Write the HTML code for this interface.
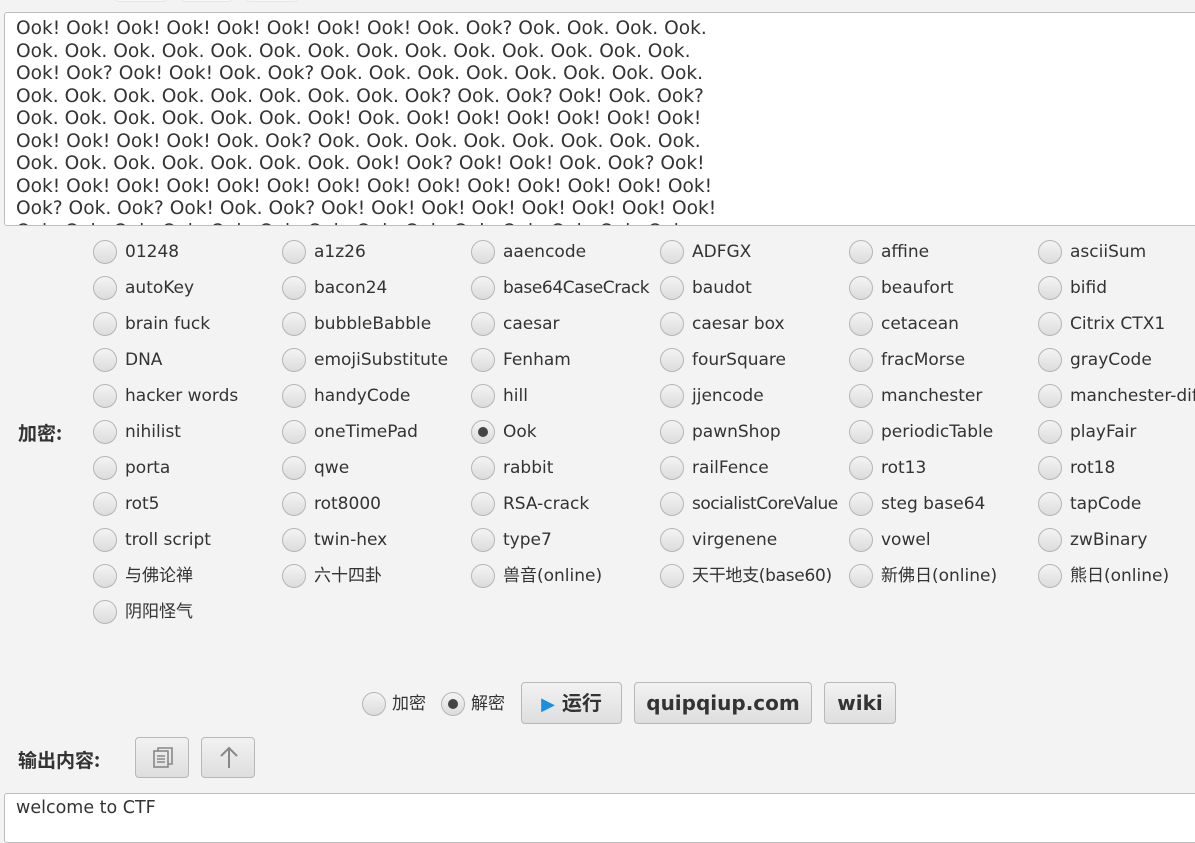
<!DOCTYPE html>
<html><head><meta charset="utf-8"><style>
*{margin:0;padding:0;box-sizing:border-box}
body{width:1195px;height:832px;background:#f3f3f3;position:relative;overflow:hidden;font-family:"DejaVu Sans","Noto Sans CJK SC",sans-serif;color:#333}
.tab{position:absolute;top:-6px;height:8px;width:52px;background:#f8f8f8;border-radius:4px;border:1px solid #e6e6e6}
.ta{position:absolute;left:4px;top:12px;width:1200px;height:214px;background:#fff;border:1px solid #bdbdbd;border-radius:3px;overflow:hidden;padding:5px 0 0 11px;font-size:18.6px;line-height:22.5px;white-space:pre;color:#333}
.r{position:absolute;height:24px;font-size:17px;line-height:24px;white-space:nowrap;padding-left:32px}
.r::before{content:"";position:absolute;left:0;top:0;width:22px;height:22px;border-radius:50%;border:1px solid #b5b5b5;background:linear-gradient(#f4f4f4,#dcdcdc)}
.r.on::after{content:"";position:absolute;left:7px;top:7px;width:10px;height:10px;border-radius:50%;background:#444}
.lbl{position:absolute;font-weight:bold;font-size:19px;font-family:"Noto Sans CJK SC",sans-serif;color:#333}
.btn{position:absolute;border:1px solid #b8b8b8;border-radius:4px;background:linear-gradient(#f2f2f2,#dedede);font-weight:bold;font-size:20px;text-align:center;color:#333;font-family:"DejaVu Sans","Noto Sans CJK SC",sans-serif}
.out{position:absolute;left:4px;top:793px;width:1200px;height:50px;background:#fff;border:1px solid #bdbdbd;border-radius:3px;padding:4px 0 0 11px;font-size:17.5px}
</style></head><body>
<div class="tab" style="left:115px"></div><div class="tab" style="left:181px"></div><div class="tab" style="left:246px"></div>
<div class="ta">Ook! Ook! Ook! Ook! Ook! Ook! Ook! Ook! Ook. Ook? Ook. Ook. Ook. Ook.
Ook. Ook. Ook. Ook. Ook. Ook. Ook. Ook. Ook. Ook. Ook. Ook. Ook. Ook.
Ook! Ook? Ook! Ook! Ook. Ook? Ook. Ook. Ook. Ook. Ook. Ook. Ook. Ook.
Ook. Ook. Ook. Ook. Ook. Ook. Ook. Ook. Ook? Ook. Ook? Ook! Ook. Ook?
Ook. Ook. Ook. Ook. Ook. Ook. Ook! Ook. Ook! Ook! Ook! Ook! Ook! Ook!
Ook! Ook! Ook! Ook! Ook. Ook? Ook. Ook. Ook. Ook. Ook. Ook. Ook. Ook.
Ook. Ook. Ook. Ook. Ook. Ook. Ook. Ook! Ook? Ook! Ook! Ook. Ook? Ook!
Ook! Ook! Ook! Ook! Ook! Ook! Ook! Ook! Ook! Ook! Ook! Ook! Ook! Ook!
Ook? Ook. Ook? Ook! Ook. Ook? Ook! Ook! Ook! Ook! Ook! Ook! Ook! Ook!
Ook. Ook. Ook. Ook. Ook. Ook. Ook. Ook. Ook. Ook. Ook. Ook. Ook. Ook.</div>

<div class="lbl" style="left:18px;top:419px">加密:</div>

<div class="r" style="left:93px;top:240px">01248</div><div class="r" style="left:282px;top:240px">a1z26</div><div class="r" style="left:471px;top:240px">aaencode</div><div class="r" style="left:660px;top:240px">ADFGX</div><div class="r" style="left:849px;top:240px">affine</div><div class="r" style="left:1038px;top:240px">asciiSum</div>
<div class="r" style="left:93px;top:276px">autoKey</div><div class="r" style="left:282px;top:276px">bacon24</div><div class="r" style="left:471px;top:276px;letter-spacing:-0.4px">base64CaseCrack</div><div class="r" style="left:660px;top:276px">baudot</div><div class="r" style="left:849px;top:276px">beaufort</div><div class="r" style="left:1038px;top:276px">bifid</div>
<div class="r" style="left:93px;top:312px">brain fuck</div><div class="r" style="left:282px;top:312px">bubbleBabble</div><div class="r" style="left:471px;top:312px">caesar</div><div class="r" style="left:660px;top:312px">caesar box</div><div class="r" style="left:849px;top:312px">cetacean</div><div class="r" style="left:1038px;top:312px">Citrix CTX1</div>
<div class="r" style="left:93px;top:348px">DNA</div><div class="r" style="left:282px;top:348px">emojiSubstitute</div><div class="r" style="left:471px;top:348px">Fenham</div><div class="r" style="left:660px;top:348px">fourSquare</div><div class="r" style="left:849px;top:348px">fracMorse</div><div class="r" style="left:1038px;top:348px">grayCode</div>
<div class="r" style="left:93px;top:384px">hacker words</div><div class="r" style="left:282px;top:384px">handyCode</div><div class="r" style="left:471px;top:384px">hill</div><div class="r" style="left:660px;top:384px">jjencode</div><div class="r" style="left:849px;top:384px">manchester</div><div class="r" style="left:1038px;top:384px">manchester-diff</div>
<div class="r" style="left:93px;top:420px">nihilist</div><div class="r" style="left:282px;top:420px">oneTimePad</div><div class="r on" style="left:471px;top:420px">Ook</div><div class="r" style="left:660px;top:420px">pawnShop</div><div class="r" style="left:849px;top:420px">periodicTable</div><div class="r" style="left:1038px;top:420px">playFair</div>
<div class="r" style="left:93px;top:456px">porta</div><div class="r" style="left:282px;top:456px">qwe</div><div class="r" style="left:471px;top:456px">rabbit</div><div class="r" style="left:660px;top:456px">railFence</div><div class="r" style="left:849px;top:456px">rot13</div><div class="r" style="left:1038px;top:456px">rot18</div>
<div class="r" style="left:93px;top:492px">rot5</div><div class="r" style="left:282px;top:492px">rot8000</div><div class="r" style="left:471px;top:492px">RSA-crack</div><div class="r" style="left:660px;top:492px;letter-spacing:-0.5px">socialistCoreValue</div><div class="r" style="left:849px;top:492px">steg base64</div><div class="r" style="left:1038px;top:492px">tapCode</div>
<div class="r" style="left:93px;top:528px">troll script</div><div class="r" style="left:282px;top:528px">twin-hex</div><div class="r" style="left:471px;top:528px">type7</div><div class="r" style="left:660px;top:528px">virgenene</div><div class="r" style="left:849px;top:528px">vowel</div><div class="r" style="left:1038px;top:528px">zwBinary</div>
<div class="r" style="left:93px;top:564px">与佛论禅</div><div class="r" style="left:282px;top:564px">六十四卦</div><div class="r" style="left:471px;top:564px">兽音(online)</div><div class="r" style="left:660px;top:564px;letter-spacing:-0.3px">天干地支(base60)</div><div class="r" style="left:849px;top:564px">新佛日(online)</div><div class="r" style="left:1038px;top:564px">熊日(online)</div>
<div class="r" style="left:93px;top:600px">阴阳怪气</div>

<div class="r" style="left:362px;top:692px;font-size:17px;padding-left:30px">加密</div>
<div class="r on" style="left:441px;top:692px;font-size:17px;padding-left:30px">解密</div>
<div class="btn" style="left:521px;top:682px;width:101px;height:42px;line-height:40px"><span style="color:#1a8fe0;font-size:18px">▶</span> 运行</div>
<div class="btn" style="left:634px;top:682px;width:178px;height:42px;line-height:40px">quipqiup.com</div>
<div class="btn" style="left:824px;top:682px;width:72px;height:42px;line-height:40px">wiki</div>

<div class="lbl" style="left:18px;top:746px">输出内容:</div>
<div class="btn" style="left:135px;top:737px;width:54px;height:41px">
<svg width="54" height="40" viewBox="0 0 54 40"><rect x="18" y="13" width="14" height="16" fill="none" stroke="#888" stroke-width="1.6"/><path d="M22 13V10h14v16h-4" fill="none" stroke="#888" stroke-width="1.6"/><path d="M21 18h8M21 21h8M21 24h8" stroke="#888" stroke-width="1.4"/></svg></div>
<div class="btn" style="left:201px;top:737px;width:54px;height:41px">
<svg width="54" height="40" viewBox="0 0 54 40"><path d="M27 30V10M19 18l8-8 8 8" fill="none" stroke="#888" stroke-width="2"/></svg></div>

<div class="out">welcome to CTF</div>
</body></html>
